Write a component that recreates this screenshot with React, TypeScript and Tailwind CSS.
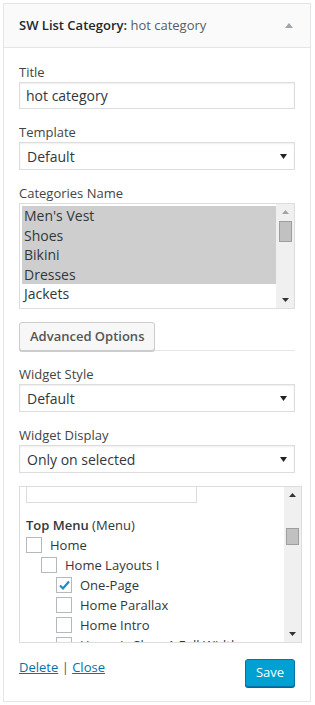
import React from "react";

const Arrow = () => (
  <svg width="7" height="5" viewBox="0 0 7 5" className="shrink-0">
    <path d="M0 0 L7 0 L3.5 5 Z" fill="#222" />
  </svg>
);

const Select = ({ value }: { value: string }) => (
  <div className="flex h-[28px] w-full items-center justify-between border border-[#ddd] bg-white pl-[7px] pr-[7px] text-[14px] text-[#32373c] shadow-[inset_0_1px_2px_rgba(0,0,0,0.07)]">
    <span>{value}</span>
    <Arrow />
  </div>
);

const Label = ({ children }: { children: React.ReactNode }) => (
  <div className="mb-[1px] text-[13px] leading-[18px] text-[#444]">{children}</div>
);

const Box = ({ checked }: { checked?: boolean }) => (
  <div className="flex h-[16px] w-[16px] shrink-0 items-center justify-center border border-[#b4b9be] bg-white">
    {checked && (
      <svg width="13" height="13" viewBox="0 0 13 13">
        <path d="M2 6.5 L5 9.5 L11 2.5" stroke="#1e8cbe" strokeWidth="2.2" fill="none" />
      </svg>
    )}
  </div>
);

const Scroll = ({ thumbGap, thumbH, wide }: { thumbGap: number; thumbH: number; wide?: boolean }) => (
  <div className={`flex h-full shrink-0 flex-col items-center bg-[#f0f0f0] ${wide ? "w-[17px]" : "w-[18px]"}`}>
    <svg width="7" height="4" viewBox="0 0 7 4" className="mt-[6px]">
      <path d="M0 4 L7 4 L3.5 0 Z" fill={wide ? "#333" : "#a3a3a3"} />
    </svg>
    <div
      className="w-[13px] border border-[#9e9e9e] bg-[#c1c1c1]"
      style={{ marginTop: thumbGap, height: thumbH }}
    />
    <div className="flex-1" />
    <svg width="7" height="4" viewBox="0 0 7 4" className="mb-[6px]">
      <path d="M0 0 L7 0 L3.5 4 Z" fill="#333" />
    </svg>
  </div>
);

const Row = ({ indent, checked, children }: { indent: string; checked?: boolean; children: React.ReactNode }) => (
  <div className={`flex h-[16px] items-center gap-[8px] whitespace-nowrap leading-[16px] ${indent}`}>
    <Box checked={checked} />
    <span>{children}</span>
  </div>
);

export default function App() {
  return (
    <div className="min-h-[705px] bg-white pt-[3px] pl-[3px] font-['Open_Sans',sans-serif]">
      <div className="w-[308px] border border-[#e5e5e5] bg-white">
        <div className="flex h-[44px] items-center justify-between border-b border-[#e5e5e5] bg-[#fafafa] pl-[15px] pr-[17px]">
          <div className="text-[13px] text-[#23282d]">
            <span className="font-semibold">SW List Category:</span>{" "}
            <span className="text-[#555d66]">hot category</span>
          </div>
          <svg width="8" height="5" viewBox="0 0 8 5">
            <path d="M0 5 L8 5 L4 0 Z" fill="#a0a5aa" />
          </svg>
        </div>
        <div className="px-[15px] pt-[15px] pb-[14px]">
          <Label>Title</Label>
          <div className="flex h-[27px] items-center border border-[#ddd] bg-white pl-[6px] text-[14px] text-[#32373c] shadow-[inset_0_1px_2px_rgba(0,0,0,0.07)]">
            hot category
          </div>

          <div className="mt-[14px]">
            <Label>Template</Label>
            <Select value="Default" />
          </div>

          <div className="mt-[14px]">
            <Label>Categories Name</Label>
            <div className="flex h-[106px] border border-[#ddd] bg-white">
              <div className="flex-1 pt-[2px] pl-[2px] text-[14px] leading-[19.5px] text-[#32373c]">
                <div className="bg-[#cecece] pl-[2px]">Men's Vest</div>
                <div className="bg-[#cecece] pl-[2px]">Shoes</div>
                <div className="bg-[#cecece] pl-[2px]">Bikini</div>
                <div className="bg-[#cecece] pl-[2px]">Dresses</div>
                <div className="pl-[2px]">Jackets</div>
              </div>
              <Scroll thumbGap={7} thumbH={21} />
            </div>
          </div>

          <div className="mt-[13px] flex border-b border-[#e5e5e5]">
            <div className="-mb-px flex h-[29px] items-center rounded-[3px] border border-[#ccc] bg-[#f7f7f7] px-[10px] text-[13px] font-semibold text-[#555] shadow-[0_1px_0_#ccc]">
              Advanced Options
            </div>
          </div>

          <div className="mt-[14px]">
            <Label>Widget Style</Label>
            <Select value="Default" />
          </div>

          <div className="mt-[14px]">
            <Label>Widget Display</Label>
            <Select value="Only on selected" />
          </div>

          <div className="mt-[13px] flex h-[157px] w-[283px] border border-[#ddd] bg-white">
            <div className="relative flex-1 overflow-hidden pl-[6px] text-[13px] text-[#32373c]">
              <div className="h-[16px] w-[171px] border border-t-0 border-[#ddd] bg-white" />
              <div className="mt-[13px] leading-[18px]">
                <span className="font-semibold">Top Menu</span> (Menu)
              </div>
              <div className="mt-[3px] flex flex-col gap-[4px]">
                <Row indent="">Home</Row>
                <Row indent="pl-[15px]">Home Layouts I</Row>
                <Row indent="pl-[30px]" checked>One-Page</Row>
                <Row indent="pl-[30px]">Home Parallax</Row>
                <Row indent="pl-[30px]">Home Intro</Row>
                <Row indent="pl-[30px]">Home Is Shop 1 Full Width</Row>
              </div>
            </div>
            <Scroll thumbGap={31} thumbH={17} wide />
          </div>

          <div className="mt-[16px] flex items-start justify-between">
            <div className="-mt-[1px] text-[13px] leading-[18px] text-[#0073aa]">
              <span className="underline">Delete</span>
              <span className="text-[#555]"> | </span>
              <span className="underline">Close</span>
            </div>
            <div className="flex h-[28px] w-[50px] items-center justify-center rounded-[3px] border border-[#0073aa] bg-[#00a0d2] text-[13px] text-white shadow-[0_1px_0_#006799]">
              Save
            </div>
          </div>
        </div>
      </div>
    </div>
  );
}
